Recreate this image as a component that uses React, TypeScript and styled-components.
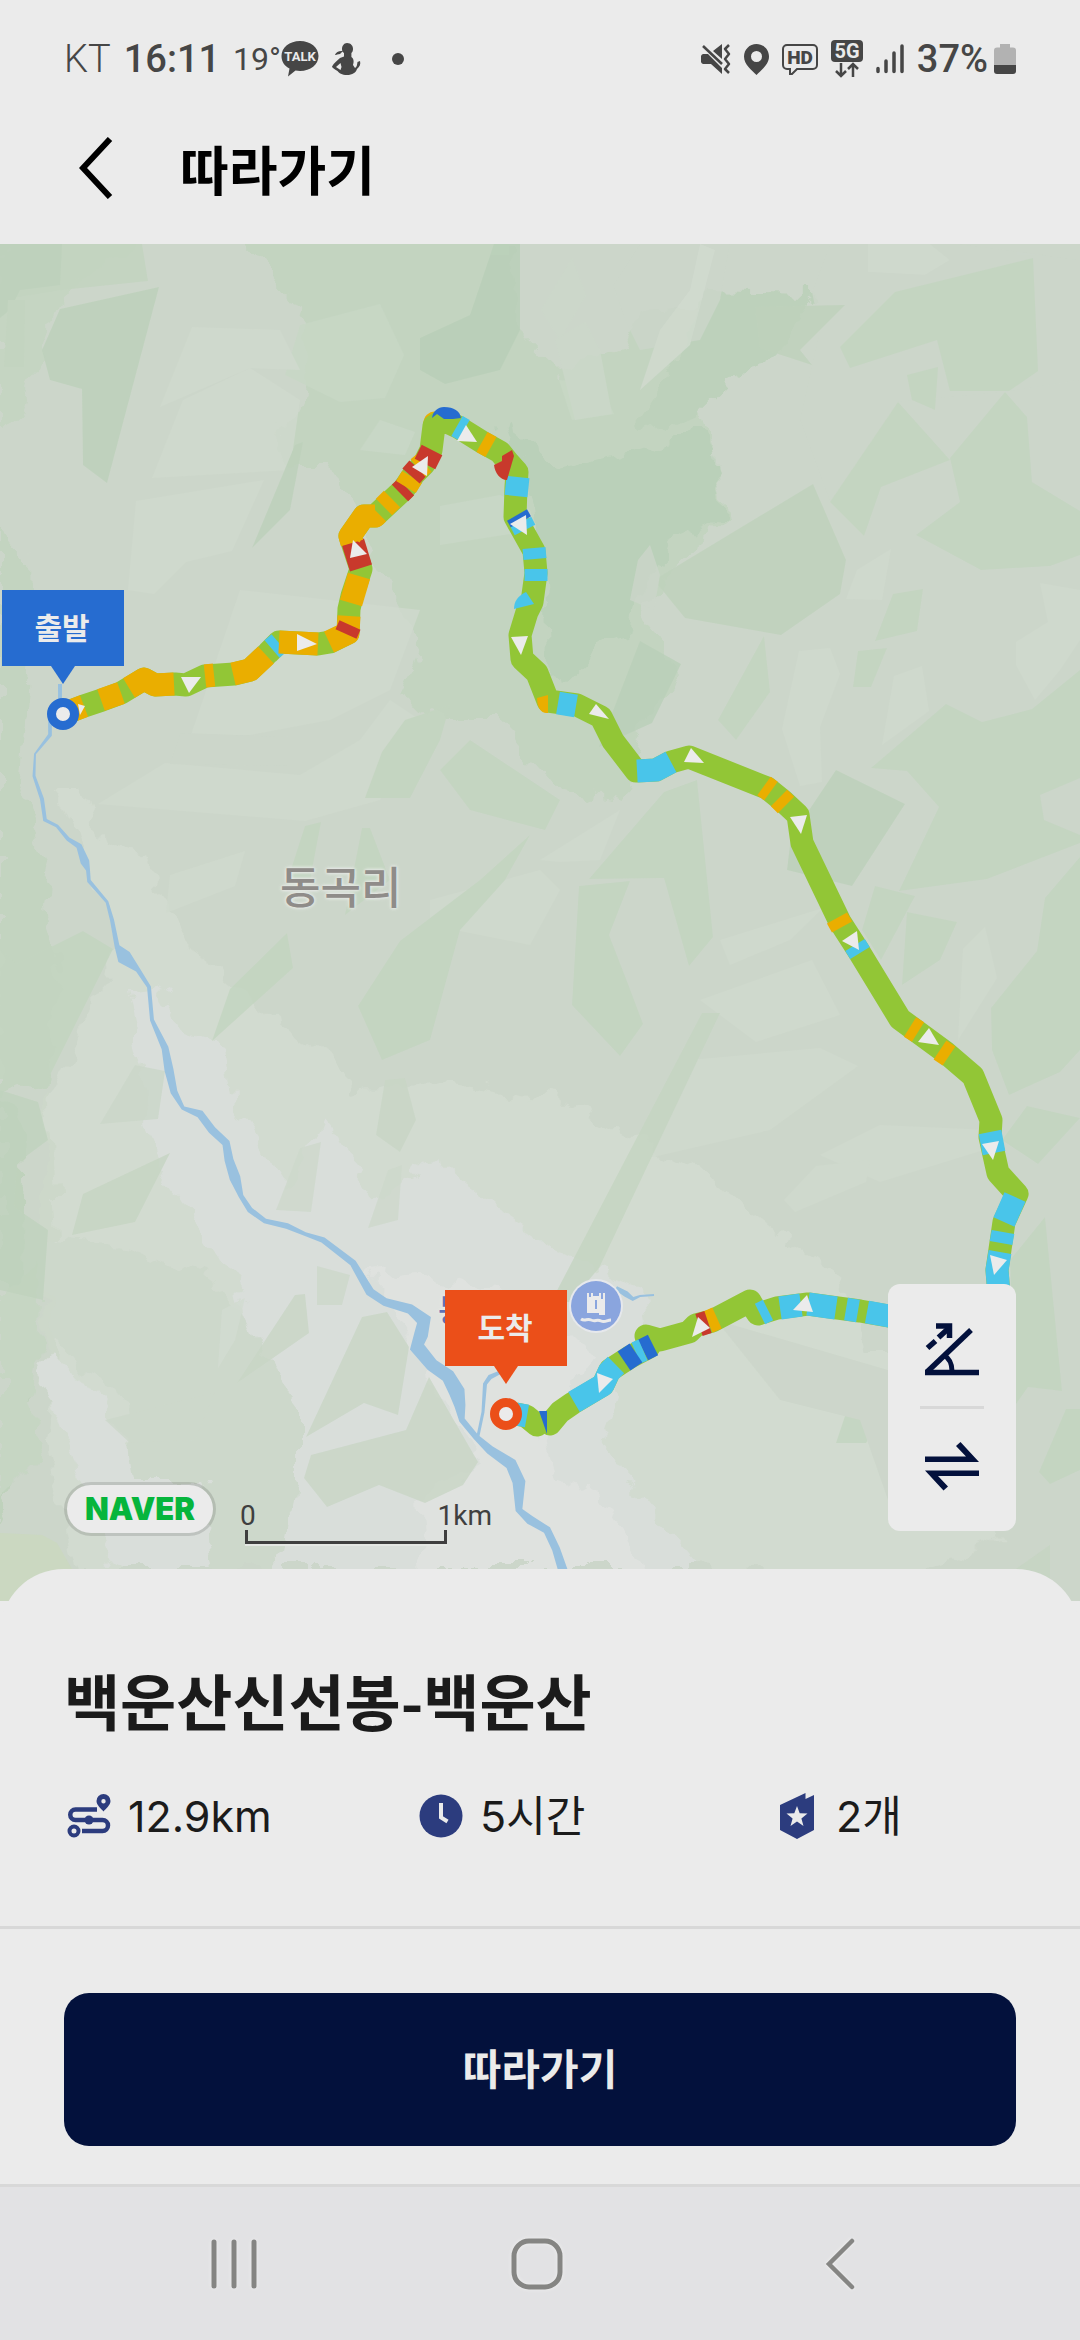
import React from "react";
import styled, { createGlobalStyle } from "styled-components";

const sans = `Inter, "Noto Sans CJK KR", sans-serif`;
const korean = `"Noto Sans CJK KR", sans-serif`;

const color = {
  surface: "#ebebeb",
  navy: "#03113c",
  ink: "#1b1b1b",
  status: "#464646",
  accent: "#2c3c7e",
  line: "#d8d8d8",
  start: "#266cd0",
  end: "#eb4f19",
};

const GlobalStyle = createGlobalStyle`
  *, *::before, *::after { box-sizing: border-box; }
  html, body { margin: 0; background: ${color.surface}; }
  button { margin: 0; padding: 0; border: 0; background: none; font: inherit; color: inherit; cursor: pointer; }
  svg { display: block; flex: none; }
`;

const Screen = styled.div`
  display: flex;
  flex-direction: column;
  min-height: 100vh;
  background: ${color.surface};
  color: ${color.ink};
  font-family: ${sans};
`;

/* ---------- status bar ---------- */

const StatusBar = styled.div`
  display: flex;
  align-items: center;
  justify-content: space-between;
  height: 92px;
  padding: 26px 64px 0;
  color: ${color.status};
  font-family: Roboto, sans-serif;
`;

const StatusGroup = styled.div<{ $gap: number }>`
  display: flex;
  align-items: center;
  gap: ${(p) => p.$gap}px;
`;

const StatusText = styled.span<{ $weight: number }>`
  font-size: 38px;
  line-height: 48px;
  font-weight: ${(p) => p.$weight};
`;

const Temperature = styled.span`
  font-size: 32px;
  line-height: 48px;
`;

/* ---------- header ---------- */

const Header = styled.header`
  display: flex;
  align-items: center;
  gap: 64px;
  height: 152px;
  padding: 0 64px 0 76px;
`;

const BackButton = styled.button`
  display: grid;
  place-items: center;
  width: 40px;
  height: 64px;
`;

const HeaderTitle = styled.h1`
  margin: 0;
  font-family: ${korean};
  font-size: 53px;
  line-height: 64px;
  font-weight: 700;
  color: #000;
`;

/* ---------- map ---------- */

const MapPanel = styled.section`
  position: relative;
  height: 1357px;
  overflow: hidden;
  background: #ccd6ca;
`;

const MapDrawing = styled.svg`
  position: absolute;
  top: 0;
  left: 0;
  width: 100%;
  height: 100%;
`;

const Pin = styled.div<{ $x: number; $y: number; $color: string }>`
  position: absolute;
  left: ${(p) => p.$x}px;
  top: ${(p) => p.$y}px;
  transform: translateX(-50%);
  display: flex;
  flex-direction: column;
  align-items: center;
  color: ${(p) => p.$color};
`;

const PinLabel = styled.span`
  display: grid;
  place-items: center;
  width: 122px;
  height: 76px;
  padding: 0 2px 4px 0;
  background: currentColor;
  font-family: ${korean};
  font-size: 30px;
  line-height: 40px;
  font-weight: 700;
  & > span { color: ${color.surface}; }
`;

const PinTail = styled.span`
  border: 12px solid transparent;
  border-top: 18px solid currentColor;
  border-bottom: 0;
`;

const PinRing = styled.span`
  width: 32px;
  height: 32px;
  margin-top: 14px;
  border: 9px solid currentColor;
  border-radius: 50%;
  background: ${color.surface};
`;

const PlaceName = styled.span<{ $x: number; $y: number; $size: number; $tint: string }>`
  position: absolute;
  left: ${(p) => p.$x}px;
  top: ${(p) => p.$y}px;
  font-family: ${korean};
  font-size: ${(p) => p.$size}px;
  line-height: 48px;
  font-weight: 500;
  color: ${(p) => p.$tint};
  text-shadow: 0 0 3px #e6e9e5, 0 0 3px #e6e9e5, 0 0 4px #e6e9e5;
`;

const MapFooter = styled.div`
  position: absolute;
  left: 64px;
  bottom: 57px;
  display: flex;
  align-items: flex-end;
  gap: 24px;
`;

const MapLogo = styled.span`
  display: grid;
  place-items: center;
  width: 152px;
  height: 54px;
  margin-bottom: 8px;
  border: 3px solid rgba(0, 0, 0, 0.12);
  border-radius: 27px;
  background: ${color.surface};
  background-clip: padding-box;
  color: #06b53c;
  font-size: 31px;
  line-height: 40px;
  font-weight: 900;
`;

const Scale = styled.div`
  width: 252px;
  color: #3f3f3f;
  font-family: Roboto, sans-serif;
  font-size: 28px;
  line-height: 28px;
`;

const ScaleLabels = styled.div`
  display: flex;
  justify-content: space-between;
`;

const ScaleBar = styled.div`
  width: 202px;
  height: 14px;
  margin-left: 5px;
  border: 3px solid currentColor;
  border-top: 0;
  box-shadow: 0 2px 0 #e4e7e3;
`;

const MapTools = styled.div`
  position: absolute;
  right: 64px;
  bottom: 70px;
  display: flex;
  flex-direction: column;
  align-items: center;
  width: 128px;
  padding: 8px 0;
  border-radius: 12px;
  background: ${color.surface};
  color: ${color.navy};
`;

const ToolButton = styled.button`
  display: grid;
  place-items: center;
  width: 128px;
  height: 114px;
`;

const ToolDivider = styled.span`
  width: 64px;
  height: 3px;
  background: ${color.line};
`;

/* ---------- sheet ---------- */

const Sheet = styled.main`
  position: relative;
  margin-top: -32px;
  padding: 91px 64px 78px;
  border-radius: 64px 64px 0 0;
  background: ${color.surface};
`;

const CourseTitle = styled.h2`
  margin: 0 0 44px;
  font-family: ${korean};
  font-size: 61px;
  line-height: 80px;
  font-weight: 700;
`;

const Stats = styled.ul`
  display: grid;
  grid-template-columns: 88fr 89fr 61fr;
  margin: 0;
  padding: 0;
  list-style: none;
`;

const Stat = styled.li`
  display: flex;
  align-items: center;
  gap: 14px;
  font-size: 43px;
  line-height: 64px;
`;

const StatIcon = styled.span`
  display: grid;
  place-items: center;
  width: 50px;
  color: ${color.accent};
`;

const ActionBar = styled.footer`
  padding: 64px 64px 38px;
  border-top: 3px solid ${color.line};
`;

const FollowButton = styled.button`
  display: block;
  width: 100%;
  height: 153px;
  padding-bottom: 6px;
  border-radius: 25px;
  background: ${color.navy};
  color: ${color.surface};
  font-family: ${korean};
  font-size: 42px;
  line-height: 56px;
  font-weight: 700;
`;

const NavBar = styled.nav`
  display: grid;
  grid-template-columns: repeat(3, 1fr);
  flex: 1;
  min-height: 156px;
  padding: 0 88px 0 82px;
  border-top: 3px solid ${color.line};
  background: #e2e2e4;
`;

const NavButton = styled.button`
  display: grid;
  place-items: center;
  color: #858583;
  & > svg { filter: drop-shadow(0 0 2px #f0f0f0); }
`;

/* ---------- map data ---------- */

type Pt = [number, number];

const river: [number, number, number][] = [
  [60, 684, 4], [60, 700, 4], [50, 720, 4], [50, 735, 4], [35, 754, 2], [34, 776, 3], [42, 799, 4], [45, 820, 4],
  [57, 826, 3], [68, 839, 4], [79, 846, 6], [85, 862, 9], [88, 870, 4], [89, 881, 4], [107, 902, 3],
  [112, 920, 4], [117, 946, 5], [124, 957, 15], [138, 970, 5], [149, 987, 4], [152, 1020, 4], [165, 1048, 7], [169, 1070, 9],
  [174, 1092, 7], [183, 1108, 4], [200, 1114, 8], [212, 1130, 8], [226, 1143, 8], [229, 1160, 9], [235, 1178, 11],
  [241, 1196, 5], [250, 1210, 6], [265, 1221, 5], [287, 1226, 6], [305, 1234, 4], [323, 1240, 6], [353, 1263, 7],
  [370, 1292, 9], [385, 1302, 8], [410, 1309, 10], [424, 1320, 15], [421, 1335, 14], [417, 1347, 15], [432, 1365, 13],
  [448, 1376, 14], [457, 1392, 16], [460, 1406, 11], [462, 1420, 6], [476, 1437, 6], [490, 1450, 9], [511, 1464, 12],
  [519, 1482, 13], [519, 1510, 7], [530, 1520, 9], [547, 1530, 8], [556, 1549, 8], [566, 1580, 10],
];

/* Outline of a line whose width changes from point to point. */
const ribbon = (pts: [number, number, number][]) => {
  const left: string[] = [];
  const right: string[] = [];
  pts.forEach(([x, y, w], i) => {
    const a = pts[Math.max(0, i - 1)];
    const b = pts[Math.min(pts.length - 1, i + 1)];
    const dx = b[0] - a[0];
    const dy = b[1] - a[1];
    const len = Math.hypot(dx, dy) || 1;
    const nx = (-dy / len) * (w / 2);
    const ny = (dx / len) * (w / 2);
    left.push(`${x + nx},${y + ny}`);
    right.unshift(`${x - nx},${y - ny}`);
  });
  return [...left, ...right].join(" ");
};

const G = "#92c636";
const O = "#eaae00";
const R = "#c8392c";
const S = "#49c5ea";
const B = "#266cd0";

const routeBase: Pt[][] = [
  [[63, 714], [84, 706], [102, 700], [121, 693], [144, 679], [155, 685], [175, 684], [186, 685], [205, 676], [234, 674],
    [250, 670], [268, 653], [279, 642], [318, 644], [330, 642], [348, 633], [349, 609], [352, 596], [361, 569], [350, 536],
    [364, 516], [375, 516], [404, 489], [414, 474], [424, 464], [431, 450], [434, 426], [443, 420], [458, 427], [482, 442],
    [500, 452], [508, 462], [517, 472], [516, 487], [515, 517], [534, 551], [536, 573], [532, 602], [527, 612], [520, 635],
    [522, 659], [537, 673], [548, 701], [577, 705], [601, 717], [613, 741], [636, 771], [656, 770], [671, 762], [689, 757],
    [767, 788], [783, 801], [798, 815], [802, 843], [840, 922], [858, 950], [900, 1019], [945, 1052], [973, 1076],
    [991, 1120], [990, 1137], [998, 1173], [1017, 1194], [1004, 1222], [997, 1270], [999, 1295]],
  [[900, 1318], [860, 1311], [808, 1304], [777, 1308], [758, 1314], [754, 1308], [750, 1301], [712, 1321], [696, 1325], [689, 1332],
    [660, 1340], [646, 1336], [649, 1347], [630, 1357], [610, 1370], [603, 1385], [573, 1403], [560, 1412], [550, 1424]],
  [[537, 1425], [526, 1416], [516, 1414]],
];

const routeParts: [string, Pt[]][] = [
  [O, [[63, 714], [84, 706]]],
  [O, [[101, 700], [121, 693]]],
  [O, [[129, 688], [144, 679], [155, 685], [174, 684]]],
  [O, [[205, 676], [214, 675]]],
  [O, [[233, 674], [250, 670], [266, 655]]],
  [S, [[272, 649], [279, 643]]],
  [O, [[279, 642], [318, 644]]],
  [O, [[329, 642], [348, 633], [349, 616]]],
  [R, [[346, 634], [350, 625]]],
  [O, [[351, 603], [359, 576]]],
  [R, [[361, 568], [353, 542]]],
  [O, [[352, 543], [350, 536], [364, 516], [375, 516], [378, 513]]],
  [O, [[384, 507], [392, 499]]],
  [R, [[400, 493], [406, 487]]],
  [O, [[406, 487], [412, 477]]],
  [R, [[411, 476], [418, 468]]],
  [O, [[418, 468], [424, 463]]],
  [R, [[425, 464], [432, 450]]],
  [S, [[457, 426], [464, 430]]],
  [O, [[482, 442], [491, 447]]],
  [S, [[518, 477], [516, 496]]],
  [B, [[517, 515], [521, 522]]],
  [S, [[521, 522], [525, 530]]],
  [S, [[534, 548], [535, 559]]],
  [S, [[536, 569], [536, 581]]],
  [S, [[558, 703], [576, 706]]],
  [S, [[637, 771], [656, 770], [671, 762]]],
  [O, [[764, 786], [771, 791]]],
  [O, [[779, 798], [786, 805]]],
  [O, [[837, 918], [842, 927]]],
  [S, [[855, 945], [860, 953]]],
  [O, [[910, 1027], [918, 1032]]],
  [O, [[940, 1050], [949, 1056]]],
  [S, [[990, 1132], [994, 1153]]],
  [S, [[1015, 1197], [1004, 1222]]],
  [S, [[1003, 1232], [1001, 1243]]],
  [S, [[1000, 1252], [997, 1270], [999, 1295]]],
  [S, [[900, 1318], [867, 1312]]],
  [S, [[858, 1311], [846, 1309]]],
  [S, [[836, 1308], [808, 1304]]],
  [S, [[801, 1305], [780, 1308]]],
  [S, [[768, 1310], [760, 1314]]],
  [O, [[717, 1318], [708, 1322]]],
  [R, [[708, 1322], [699, 1325]]],
  [B, [[653, 1345], [643, 1350]]],
  [S, [[643, 1350], [636, 1353]]],
  [B, [[636, 1353], [624, 1361]]],
  [S, [[616, 1365], [609, 1372], [603, 1385], [574, 1402]]],
  [S, [[527, 1416], [516, 1414]]],
];

const arrows = [
  "297,634 317,644 297,651", "181,677 201,677 189,693", "85,706 78,704 80,715", "353,540 367,554 350,558",
  "412,467 428,456 427,476", "466,425 477,442 457,441", "510,524 526,515 527,535", "511,637 528,636 521,655",
  "596,704 609,719 589,714", "691,748 704,763 684,762", "790,817 807,815 801,834", "842,941 857,931 859,950",
  "929,1028 939,1045 918,1042", "982,1144 999,1141 993,1160", "990,1255 1007,1260 994,1275",
  "793,1310 807,1295 813,1312", "698,1317 710,1328 692,1337", "597,1373 613,1379 599,1393",
];

/* Forest and terrain tints, from the widest areas to the smallest facets. */
const contours: [string, string][] = [
  ["#c5d5c2", "0,230 150,230 60,300 45,340 20,420 0,430"],
  ["#c3d4c0", "240,230 510,230 520,333 560,372 625,350 640,310 720,306 812,292 782,350 735,378 700,412 712,450 726,520 660,575 645,630 680,671 640,730 620,800 560,790 500,720 440,720 400,700 420,640 372,560 360,520 330,470 290,470 275,450 300,395 308,325 280,285"],
  ["#bad0b9", "500,420 560,470 620,455 700,430 712,450 720,500 722,520 665,545 655,575 640,600 632,635 600,645 562,682 548,660 545,580 530,500"],
  ["#bdd1bb", "700,290 812,292 782,350 735,378 700,412 660,430 640,420 690,345"],
  ["#c3d4c0", "0,525 30,560 32,640 20,780 50,860 44,905 60,990 46,1080 0,1100"],
  ["#bfd2bc", "0,1090 25,1140 20,1300 30,1400 10,1500 0,1530"],
  ["#c6d6c3", "0,1290 42,1260 38,1350 28,1400 40,1460 0,1500"],
  ["#cdd8ca", "46,1090 130,1180 200,1290 240,1380 180,1490 110,1440 76,1470 40,1370 46,1240"],
  ["#d2dbd0", "54,790 82,790 100,840 150,860 165,900 205,960 260,1010 330,1060 360,1090 440,1080 560,1100 700,1170 850,1290 888,1420 888,1569 76,1569 44,1440 60,1300 50,1100 120,940"],
  ["#d9deda", "125,985 157,983 187,1037 223,1048 230,1102 253,1132 290,1190 320,1117 353,1160 372,1200 440,1160 500,1210 560,1250 640,1290 660,1380 600,1440 640,1500 760,1569 120,1569 76,1470 38,1365 46,1355 82,1375 120,1430 180,1480 270,1390 240,1290 205,1240 165,1180 150,1120"],
  ["#dfe2df", "365,1275 420,1270 480,1290 540,1300 590,1350 570,1400 545,1430 560,1480 610,1500 640,1569 500,1569 425,1569 420,1500 480,1462 430,1377 385,1300"],
  ["#cdd8cb", "46,1240 130,1250 205,1275 240,1300 270,1360 300,1400 300,1480 280,1569 215,1569 200,1480 140,1480 130,1400 80,1370 50,1330"],
  ["#d2dbd0", "640,1330 760,1350 888,1350 1000,1540 900,1580 700,1569 640,1500 600,1440"],
];

const facets: [string, string][] = [
  ["#bdd1bb", "60,309 159,287 107,483 83,465 82,389 50,380 42,350"],
  ["#c3d4c0", "0,244 142,244 148,281 62,290 0,300"],
  ["#bdd1bb", "0,244 62,244 60,285 20,290 10,310 0,318"],
  ["#c3d4c0", "8,300 25,300 24,367 4,367"],
  ["#c8d8c6", "300,325 380,304 404,355 385,398 340,402 285,375"],
  ["#d0dace", "192,327 280,330 300,370 250,368 160,407"],
  ["#d0dace", "183,400 250,368 300,400 290,470 152,478"],
  ["#d0dace", "136,501 264,480 232,551 186,562 154,594 128,590"],
  ["#b9cfb8", "420,338 470,315 494,244 520,244 520,330 500,370 445,384 420,370"],
  ["#bdd1bb", "295,445 303,442 290,510 252,548"],
  ["#cad8c8", "380,420 415,432 405,455 360,450"],
  ["#c8d8c6", "559,380 600,384 614,414 572,420"],
  ["#cad8c8", "440,506 500,495 530,510 536,530 440,545"],
  ["#ccd6ca", "613,285 640,244 730,244 720,300 700,340 640,350 625,320"],
  ["#ccd8ca", "541,310 572,258 586,295 560,340"],
  ["#ccd8ca", "555,340 585,322 600,350 612,414 575,420"],
  ["#d2dbd0", "660,330 690,290 700,244 715,250 690,345 640,390"],
  ["#ccd6ca", "830,244 960,244 1080,260 1080,380 1005,392 898,402 830,502 800,420 820,330 812,292"],
  ["#c3d5c0", "840,347 895,292 1033,258 1038,371 1009,391 950,391 937,340 850,368"],
  ["#d0dace", "868,244 930,244 950,260 925,275 868,272"],
  ["#c3d5c0", "907,375 938,367 935,410 912,400"],
  ["#bfd2bc", "755,307 845,305 800,350 812,365 760,348"],
  ["#c3d5c0", "1005,392 1027,417 1032,482 1080,511 1080,555 1050,566 981,570 916,535 960,502 950,458"],
  ["#c3d5c0", "898,402 950,460 881,487 864,536 830,502"],
  ["#bfd2bc", "813,484 846,560 840,594 781,635 685,618 654,580"],
  ["#ccd6ca", "638,560 650,545 660,575 654,610 630,600"],
  ["#d0dace", "891,549 882,600 846,599 857,570"],
  ["#c3d5c0", "893,594 923,589 917,631 875,641"],
  ["#c3d5c0", "858,651 887,648 871,687 853,687"],
  ["#d0dace", "799,651 830,648 840,674 820,727 822,782 800,786 782,729"],
  ["#d0dace", "894,676 922,666 929,711 882,745"],
  ["#d0dace", "1040,583 1080,590 1080,640 1060,670 1035,700 1016,665 1016,642 1048,622"],
  ["#c3d5c0", "1080,670 1032,709 982,722 946,704 871,768 907,771 939,807 899,891 987,879 1080,843"],
  ["#ccd6ca", "1040,795 1080,778 1080,835 1044,820"],
  ["#bdd1bb", "836,770 905,804 852,886 787,870 791,837"],
  ["#c3d5c0", "764,636 770,692 736,740 718,720"],
  ["#bad0b9", "640,641 681,664 652,723 599,747"],
  ["#c3d5c0", "664,792 697,780 713,937 689,966 664,878 589,879"],
  ["#c3d5c0", "579,886 630,881 609,935 628,984 643,1024 620,1056 572,1005"],
  ["#c3d5c0", "875,886 915,896 881,960 862,930"],
  ["#c3d5c0", "1080,857 1045,898 1037,951 991,1008 992,1050 1009,1095 1060,1072 1080,1050"],
  ["#c3d5c0", "907,912 957,922 940,960 902,985"],
  ["#d0dace", "720,940 823,908 790,940 730,965"],
  ["#d0dace", "963,949 985,927 997,978 958,1040"],
  ["#d0dace", "540,860 620,810 600,860 560,862"],
  ["#d0dace", "700,1000 812,960 840,1015 756,1042"],
  ["#d0dace", "690,1060 820,1048 858,1066 770,1130 640,1160"],
  ["#d0dace", "820,1155 880,1125 990,1130 1000,1145 880,1182"],
  ["#d0dace", "784,1200 816,1166 870,1160 866,1182 795,1212"],
  ["#d0dace", "98,804 165,763 300,775 360,740 390,700 420,720 380,800 305,821"],
  ["#d0dace", "190,738 240,590 420,610 390,690 330,720 250,735"],
  ["#ccd6ca", "180,733 290,737 290,766 170,764"],
  ["#d0dace", "170,875 245,851 235,886 166,913"],
  ["#d0dace", "430,900 540,870 560,890 530,945 430,925"],
  ["#c3d5c0", "382,752 405,720 450,705 440,740 410,798 365,798"],
  ["#c3d5c0", "440,770 470,740 560,800 545,830 470,810"],
  ["#c3d5c0", "305,826 321,822 310,880 286,885"],
  ["#c3d5c0", "362,828 370,828 390,880 345,915"],
  ["#c3d5c0", "530,835 480,880 400,941 358,1006 382,1060 430,1040 460,930 505,880"],
  ["#c3d5c0", "0,949 17,964 83,931 113,949 48,1079 0,1079"],
  ["#cbd7c9", "135,1065 165,1071 158,1119 100,1124"],
  ["#c3d5c0", "287,933 293,968 212,1041 230,989"],
  ["#c6d5c3", "83,1194 170,1153 135,1222 72,1235"],
  ["#c0d3be", "0,1090 38,1102 48,1140 17,1163 14,1207 48,1230 43,1300 0,1290"],
  ["#ced9cc", "300,1148 321,1142 311,1212 276,1210"],
  ["#c9d6c6", "385,1080 405,1078 416,1120 400,1152 376,1135"],
  ["#ced9cc", "388,1170 402,1165 398,1220 368,1228"],
  ["#c9d6c6", "295,1295 305,1294 309,1333 237,1383"],
  ["#c9d6c6", "362,1317 387,1312 409,1347 398,1415 364,1403 306,1437"],
  ["#c9d6c6", "429,1377 478,1462 463,1485 425,1503 379,1485 327,1507 304,1478 311,1455 406,1430"],
  ["#cdd8cb", "317,1266 350,1275 342,1305 317,1305"],
  ["#cdd8cb", "105,1420 215,1392 195,1440 130,1443"],
  ["#d3dcd2", "222,1310 245,1298 235,1340 218,1368"],
  ["#c3d5c0", "851,1398 888,1398 888,1410 866,1443 836,1443"],
  ["#c5d5c2", "702,1013 720,1013 599,1268 570,1302 551,1302"],
  ["#c3d5c0", "1027,1106 1080,1118 1038,1164 1002,1140"],
  ["#c3d5c0", "1045,1217 1062,1391 1028,1387 1016,1404 1010,1260"],
  ["#c3d5c0", "1066,1409 1080,1409 1080,1470 1050,1484 1039,1472"],
  ["#ccd6ca", "716,1320 888,1370 888,1500 860,1420 780,1400"],
  ["#c5d5c2", "1016,1569 1050,1545 1050,1601 1020,1590"],
  ["#cad8be", "0,1533 42,1535 57,1543 72,1569 40,1601 0,1601"],
];

const poly = (pts: Pt[]) => pts.map((p) => p.join(",")).join(" ");

function TrailMap() {
  return (
    <MapDrawing viewBox="0 244 1080 1357" preserveAspectRatio="xMinYMin slice" aria-hidden="true">
      <defs>
        <filter id="rough" x="-5%" y="-5%" width="110%" height="110%">
          <feTurbulence type="fractalNoise" baseFrequency="0.035" numOctaves="3" seed="4" result="n" />
          <feDisplacementMap in="SourceGraphic" in2="n" scale="34" xChannelSelector="R" yChannelSelector="G" />
        </filter>
      </defs>
      <rect y="244" width="1080" height="1357" fill="#ccd6ca" />
      <g filter="url(#rough)">
        {contours.map(([fill, points], i) => <polygon key={i} fill={fill} points={points} />)}
      </g>
      <g opacity="0.8">
        {facets.map(([fill, points], i) => <polygon key={i} fill={fill} points={points} />)}
      </g>
      <polygon fill="#99c1df" points={ribbon(river)} />
      <polygon fill="#99c1df" points={ribbon([[505, 1370, 3], [490, 1377, 5], [485, 1384, 4], [483, 1412, 3], [478, 1436, 3]])} />
      <polygon fill="#99c1df" points={ribbon([[616, 1288, 4], [626, 1294, 6], [633, 1299, 4], [640, 1296, 2], [654, 1295, 2]])} />
      <g fill="none" strokeWidth="23" strokeLinejoin="round">
        <path d="M436 423h-1" stroke={O} strokeLinecap="round" />
        {routeBase.map((pts, i) => (
          <polyline key={i} points={poly(pts)} stroke={G} strokeLinecap="round" />
        ))}
        {routeParts.map(([stroke, pts], i) => <polyline key={i} points={poly(pts)} stroke={stroke} />)}
      </g>
      <path d="M432 418c1-7 6-11 12-11 10 0 16 4 17 11l-8 1h-9l-7-5z" fill={B} />
      <path d="M512 450l2 6-7 24c-7 0-12-7-13-15l8-4v-5z" fill={R} />
      <path d="M514 609c0-8 4-13 12-17l8 12z" fill={S} />
      <path d="M537 698l11-3v18c-7 1-11-6-11-15z" fill={O} />
      <path d="M539 1411h8v23z" fill={B} />
      <g fill="#ebebeb">{arrows.map((points) => <polygon key={points} points={points} />)}</g>
      <g>
        <circle cx="596" cy="1306" r="27" fill="#e6e8ec" />
        <circle cx="596" cy="1306" r="25" fill="#8aa5de" />
        <path d="M587 1293h6v3h6v-3h6v22h-6v-2h-12z" fill="#ebebeb" />
        <path d="M590 1293v4M602 1293v6M596 1300v9" stroke="#8aa5de" strokeWidth="2" />
        <path d="M581 1319c4 3 6-1 10 1s6-1 10 1 6-1 10-1" fill="none" stroke="#ebebeb" strokeWidth="3" />
      </g>
    </MapDrawing>
  );
}

/* ---------- icons ---------- */

const TalkIcon = () => (
  <svg width="38" height="36" viewBox="0 0 38 36">
    <path d="M19 0c10.500 0 18.500 6.500 18.500 15S29.500 30 19 30c-1.500 0-3 0-4.500-.4L7 35.500 8.500 27.500C3.500 25 .5 20.500.5 15 .5 6.500 8.500 0 19 0z" fill="currentColor" />
    <text x="19" y="20" textAnchor="middle" fill={color.surface} fontFamily="Roboto, sans-serif" fontWeight="700" fontSize="13">TALK</text>
  </svg>
);

const PersonIcon = () => (
  <svg width="30" height="34" viewBox="0 0 30 34" fill="currentColor">
    <path fillRule="evenodd" d="M15 1c4 0 6 3 6 6 0 2-.6 3-1.600 4v4c2.600 1.500 2.600 5 1.600 8l2 3c2-1 2-3 2.500-6l2.500-1c1 3-.5 6-3 8-1 3.500-4.500 6-10 6-5 0-8-2-9.500-4C2.500 27 0 26 0 24.500 2 21 5 18.500 8 16l4-1.500V11c-1.500-1-2-2-2-4 0-3 2-6 5-6zM8.500 21L4 25l4.500 3 1-3z" />
    <path d="M3 13c1-3 4-4.500 8-4l-3 3c-2 .3-4 1-5 1z" />
  </svg>
);

const MuteVibrateIcon = () => (
  <svg width="30" height="30" viewBox="0 0 30 30">
    <path d="M0 12a3 3 0 0 1 2-2h5L21 24v6L10 20H2a3 3 0 0 1-2-2zM12 7l9-7v15z" fill="currentColor" />
    <path d="M2 2l19 18" stroke="currentColor" strokeWidth="2.500" />
    <path d="M28 1l-4 4 4 5-4 5 4 5-4 5 4 4" fill="none" stroke="currentColor" strokeWidth="2.500" strokeLinejoin="round" />
  </svg>
);

const PinIcon = () => (
  <svg width="25" height="31" viewBox="0 0 25 31">
    <path fillRule="evenodd" fill="currentColor" d="M12.500 0C19.500 0 25 5.500 25 12.500c0 8-8 14-12.500 18.500C8 26.500 0 20.500 0 12.500 0 5.500 5.500 0 12.500 0zm0 7a5.500 5.500 0 1 0 0 11 5.500 5.500 0 0 0 0-11z" />
  </svg>
);

const HdIcon = () => (
  <svg width="36" height="31" viewBox="0 0 36 31">
    <path d="M5 1h26a4 4 0 0 1 4 4v16a4 4 0 0 1-4 4H15l-5 5H8v-5H5a4 4 0 0 1-4-4V5a4 4 0 0 1 4-4z" fill="none" stroke="currentColor" strokeWidth="2" />
    <text x="18" y="20" textAnchor="middle" fill="currentColor" fontFamily="Roboto, sans-serif" fontWeight="900" fontSize="19">HD</text>
  </svg>
);

const FiveGIcon = () => (
  <svg width="32" height="38" viewBox="0 0 32 38">
    <rect x="0" y="0" width="32" height="22" rx="4" fill="currentColor" />
    <text x="16" y="18" textAnchor="middle" fill={color.surface} fontFamily="Roboto, sans-serif" fontWeight="700" fontSize="20">5G</text>
    <path d="M10 23v12M5 31l5 5 5-5M22 37V25M17 29l5-5 5 5" fill="none" stroke="currentColor" strokeWidth="2.500" />
  </svg>
);

const SignalIcon = () => (
  <svg width="28" height="30" viewBox="0 0 28 30" stroke="currentColor" strokeWidth="3.500" strokeLinecap="round">
    <path d="M2 24.500v3M10 17v10.500M18 9v18.500M26 2v25.500" />
  </svg>
);

const BatteryIcon = () => (
  <svg width="22" height="30" viewBox="0 0 22 30">
    <path d="M6 0h10v3.500h3a3 3 0 0 1 3 3V21H0V6.500a3 3 0 0 1 3-3h3z" fill="#b2b2b2" />
    <path d="M0 21h22v6a3 3 0 0 1-3 3H3a3 3 0 0 1-3-3z" fill="currentColor" />
  </svg>
);

const SlopeIcon = () => (
  <svg width="54" height="53" viewBox="0 0 54 53" fill="none" stroke="currentColor" strokeWidth="5.500">
    <path d="M0 49.500h54" />
    <path d="M2 49L46 7" />
    <path d="M19 32q8 5 8 16" strokeWidth="5" />
    <path d="M2.500 25l8-7M13.500 14.500L24 5" />
    <path d="M11 3h13.500v12" />
  </svg>
);

const SwapIcon = () => (
  <svg width="54" height="49" viewBox="0 0 54 49" fill="currentColor">
    <path d="M0 14.500h41L31 4l4.500-4L54 20H0z" />
    <path d="M54 34H13l10 10.500-4.500 4L0 28.500h54z" />
  </svg>
);

const RouteIcon = () => (
  <svg width="44" height="44" viewBox="0 0 44 44">
    <path d="M30 15.500H8.500a5.200 5.200 0 0 0 0 10.500h27a5.500 5.500 0 0 1 0 11H15" fill="none" stroke="currentColor" strokeWidth="4.500" />
    <circle cx="22" cy="26" r="4.500" fill="currentColor" />
    <circle cx="7" cy="37" r="4.500" fill={color.surface} stroke="currentColor" strokeWidth="4" />
    <path fillRule="evenodd" fill="currentColor" d="M36.500 0a7 7 0 0 1 7 7c0 4-4.500 7.500-7 10.500-2.500-3-7-6.500-7-10.500a7 7 0 0 1 7-7zm0 5a2.200 2.200 0 1 0 0 4.400 2.200 2.200 0 0 0 0-4.400z" />
  </svg>
);

const ClockIcon = () => (
  <svg width="44" height="44" viewBox="0 0 44 44">
    <circle cx="22" cy="22" r="21.500" fill="currentColor" />
    <path d="M22 9v14.500l6.500 4" fill="none" stroke={color.surface} strokeWidth="4" />
  </svg>
);

const BadgeIcon = () => (
  <svg width="34" height="46" viewBox="0 0 34 46">
    <path d="M0 12L25.500 0v6L34 2v35l-17 9-17-9z" fill="currentColor" />
    <path d="M17 13l2.700 7.300 7.800.3-6.100 4.800 2.100 7.600-6.500-4.400-6.500 4.400 2.100-7.600-6.100-4.800 7.800-.3z" fill={color.surface} />
  </svg>
);

export default function App() {
  return (
    <>
      <GlobalStyle />
      <Screen>
        <StatusBar>
          <StatusGroup $gap={13}>
            <StatusText $weight={300}>KT</StatusText>
            <StatusText $weight={500}>16:11</StatusText>
            <StatusGroup $gap={0}>
              <Temperature>19°</Temperature>
              <TalkIcon />
            </StatusGroup>
            <PersonIcon />
            <svg width="30" height="12" viewBox="0 0 30 12"><circle cx="23" cy="6" r="6" fill="currentColor" /></svg>
          </StatusGroup>
          <StatusGroup $gap={13}>
            <MuteVibrateIcon />
            <PinIcon />
            <HdIcon />
            <FiveGIcon />
            <SignalIcon />
            <StatusGroup $gap={6}>
              <StatusText $weight={500}>37%</StatusText>
              <BatteryIcon />
            </StatusGroup>
          </StatusGroup>
        </StatusBar>

        <Header>
          <BackButton aria-label="뒤로">
            <svg width="34" height="62" viewBox="0 0 34 62"><path d="M31 2L4 31l27 29" fill="none" stroke="#000" strokeWidth="6" /></svg>
          </BackButton>
          <HeaderTitle>따라가기</HeaderTitle>
        </Header>

        <MapPanel>
          <TrailMap />
          <PlaceName $x={280} $y={617} $size={44} $tint="#8f8c89">동곡리</PlaceName>
          <PlaceName $x={438} $y={1040} $size={32} $tint="#5f70b4">동</PlaceName>
          <Pin $x={63} $y={346} $color={color.start}>
            <PinLabel><span>출발</span></PinLabel>
            <PinTail />
            <PinRing />
          </Pin>
          <Pin $x={506} $y={1046} $color={color.end}>
            <PinLabel><span>도착</span></PinLabel>
            <PinTail />
            <PinRing />
          </Pin>
          <MapFooter>
            <MapLogo>NAVER</MapLogo>
            <Scale>
              <ScaleLabels><span>0</span><span>1km</span></ScaleLabels>
              <ScaleBar />
            </Scale>
          </MapFooter>
          <MapTools>
            <ToolButton aria-label="경사도"><SlopeIcon /></ToolButton>
            <ToolDivider />
            <ToolButton aria-label="방향 전환"><SwapIcon /></ToolButton>
          </MapTools>
        </MapPanel>

        <Sheet>
          <CourseTitle>백운산신선봉-백운산</CourseTitle>
          <Stats>
            <Stat><StatIcon><RouteIcon /></StatIcon>12.9km</Stat>
            <Stat><StatIcon><ClockIcon /></StatIcon>5시간</Stat>
            <Stat><StatIcon><BadgeIcon /></StatIcon>2개</Stat>
          </Stats>
        </Sheet>

        <ActionBar>
          <FollowButton>따라가기</FollowButton>
        </ActionBar>

        <NavBar>
          <NavButton aria-label="최근 앱">
            <svg width="46" height="50" viewBox="0 0 46 50"><path d="M3 3v44M23 3v44M43 3v44" stroke="currentColor" strokeWidth="5" strokeLinecap="round" /></svg>
          </NavButton>
          <NavButton aria-label="홈">
            <svg width="52" height="52" viewBox="0 0 52 52"><rect x="3" y="3" width="46" height="46" rx="15" fill="none" stroke="currentColor" strokeWidth="5" /></svg>
          </NavButton>
          <NavButton aria-label="뒤로 가기">
            <svg width="30" height="52" viewBox="0 0 30 52"><path d="M27 3L4 26l23 23" fill="none" stroke="currentColor" strokeWidth="4.500" strokeLinecap="round" /></svg>
          </NavButton>
        </NavBar>
      </Screen>
    </>
  );
}
